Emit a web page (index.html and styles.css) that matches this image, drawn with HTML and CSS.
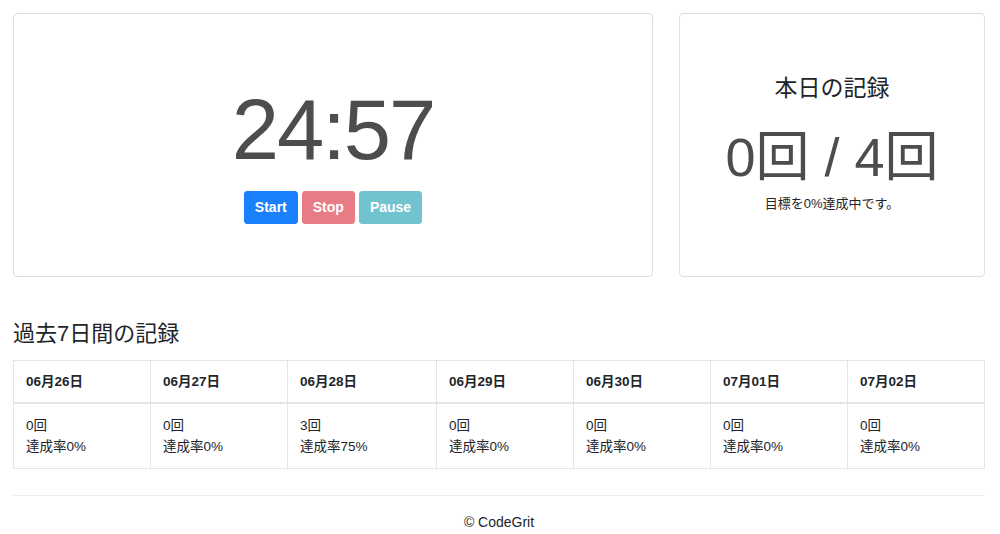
FILE: index.html
```html
<!DOCTYPE html>
<html lang="ja">
<head>
<meta charset="utf-8">
<title>Pomodoro</title>
<link rel="stylesheet" href="styles.css">
</head>
<body>
<main class="page">
  <section class="top-row">
    <div class="card timer-card">
      <div class="timer">24:57</div>
      <div class="controls">
        <button class="btn btn-start">Start</button>
        <button class="btn btn-stop">Stop</button>
        <button class="btn btn-pause">Pause</button>
      </div>
    </div>
    <div class="card today-card">
      <h2 class="today-title">本日の記録</h2>
      <div class="today-count">0回 / 4回</div>
      <p class="today-note">目標を0%達成中です。</p>
    </div>
  </section>

  <h2 class="history-title">過去7日間の記録</h2>
  <table class="history">
    <thead>
      <tr>
        <th>06月26日</th><th>06月27日</th><th>06月28日</th><th>06月29日</th><th>06月30日</th><th>07月01日</th><th>07月02日</th>
      </tr>
    </thead>
    <tbody>
      <tr>
        <td>0回<br>達成率0%</td>
        <td>0回<br>達成率0%</td>
        <td>3回<br>達成率75%</td>
        <td>0回<br>達成率0%</td>
        <td>0回<br>達成率0%</td>
        <td>0回<br>達成率0%</td>
        <td>0回<br>達成率0%</td>
      </tr>
    </tbody>
  </table>

  <footer class="footer">
    <p>© CodeGrit</p>
  </footer>
</main>
</body>
</html>
```
FILE: styles.css
```css
* { box-sizing: border-box; }
html, body { margin: 0; padding: 0; background: #fff; }
body {
  font-family: "Liberation Sans", Arial, "Noto Sans CJK JP", sans-serif;
  font-size: 14px;
  line-height: 1.5;
  color: #212529;
}
.page {
  padding: 13px 15px 0 13px;
}
.top-row {
  display: grid;
  grid-template-columns: 640px 1fr;
  column-gap: 26px;
}
.card {
  border: 1px solid #dfdfdf;
  border-radius: 4px;
  height: 264px;
  display: flex;
  flex-direction: column;
  align-items: center;
}
.timer-card {
  padding-top: 65px;
}
.timer {
  font-size: 85px;
  line-height: 102px;
  letter-spacing: -2px;
  color: #4d4d4d;
}
.controls {
  display: flex;
  gap: 4px;
  margin-top: 10px;
}
.btn {
  font-family: "Liberation Sans", Arial, sans-serif;
  font-size: 14px;
  font-weight: 700;
  line-height: 21px;
  padding: 5px 10px;
  border: 1px solid transparent;
  border-radius: 3px;
  color: #fff;
}
.btn-start { background: #1b80fb; border-color: #1b80fb; }
.btn-stop { background: #e77c87; border-color: #e77c87; }
.btn-pause { background: #71c3cf; border-color: #71c3cf; }

.today-card {
  padding-top: 61px;
}
.today-title {
  margin: 0;
  font-size: 23px;
  font-weight: 400;
  line-height: 1.2;
  color: #212529;
}
.today-count {
  margin-top: 22px;
  font-size: 54px;
  line-height: 1.2;
  color: #4d4d4d;
}
.today-note {
  margin: 5px 0 0;
  font-size: 13px;
}

.history-title {
  margin: 44px 0 13px;
  font-size: 22px;
  font-weight: 400;
  line-height: 1.2;
}
.history {
  width: 100%;
  border-collapse: collapse;
}
.history th, .history td {
  border: 1px solid #e3e5e8;
  text-align: left;
  padding: 11px 12px;
  line-height: 21px;
  vertical-align: top;
}
.history th {
  padding: 10px 12px;
  font-size: 13.5px;
  font-weight: 700;
  border-bottom-width: 2px;
}
.history td {
  font-size: 13.5px;
}
.footer {
  margin-top: 26px;
  border-top: 1px solid #eceeef;
  text-align: center;
}
.footer p {
  margin: 0;
  padding-top: 16px;
  font-size: 14px;
}
```
